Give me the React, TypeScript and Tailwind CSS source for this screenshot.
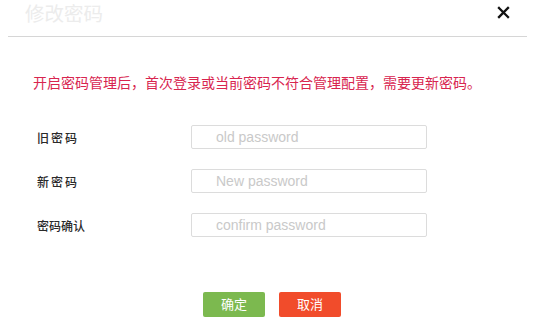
import React from "react";

const font = { fontFamily: '"Liberation Sans", Arial, "Noto Sans CJK SC", sans-serif' };

function Row({ label, placeholder, spaced }: { label: string; placeholder: string; spaced?: boolean }) {
  return (
    <div className="flex items-center h-[24px]">
      <div
        className={`w-[191px] pl-[37px] pt-[3px] text-[12px] text-[#2a2a2a] font-medium ${spaced ? "tracking-[2px]" : ""}`}
      >
        {label}
      </div>
      <div className="w-[236px] h-[24px] border border-[#dcdcdc] rounded-[2px] flex items-center pl-[24px] text-[14px] text-[#c9c9c9]">
        {placeholder}
      </div>
    </div>
  );
}

export default function App() {
  return (
    <div className="w-[547px] h-[328px] bg-white relative" style={font}>
      <div className="ml-[8px] mr-[20px] h-[37px] border-b border-[#d6d6d6] flex items-start justify-between">
        <div className="pl-[17px] pt-[3px] text-[19.5px] leading-[22px] text-[#ececec]">修改密码</div>
        <svg width="13" height="13" viewBox="0 0 13 13" className="mt-[6px] mr-[17px]">
          <path d="M2 2 L11 11 M11 2 L2 11" stroke="#111" strokeWidth="2.3" strokeLinecap="square" />
        </svg>
      </div>
      <div className="pl-[33px] mt-[37px] text-[14px] leading-[18px] text-[#d8254f]">
        开启密码管理后，首次登录或当前密码不符合管理配置，需要更新密码。
      </div>
      <div className="mt-[33px] flex flex-col gap-[20px]">
        <Row label="旧密码" placeholder="old password" spaced />
        <Row label="新密码" placeholder="New password" spaced />
        <Row label="密码确认" placeholder="confirm password" />
      </div>
      <div className="mt-[55px] flex gap-[14px] pl-[203px]">
        <div className="w-[62px] h-[25px] rounded-[2px] bg-[#7cb94f] text-white text-[13px] flex items-center justify-center">确定</div>
        <div className="w-[62px] h-[25px] rounded-[2px] bg-[#f14c2b] text-white text-[13px] flex items-center justify-center">取消</div>
      </div>
    </div>
  );
}
